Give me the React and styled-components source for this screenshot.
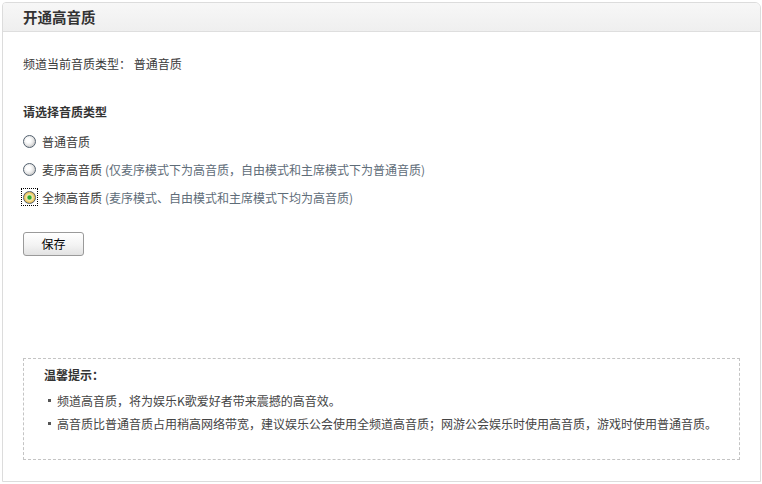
import React from "react";
import styled, { createGlobalStyle } from "styled-components";

const Global = createGlobalStyle`
  html, body { margin: 0; padding: 0; background: #fff; }
  body {
    font-family: "Noto Sans CJK SC", "Liberation Sans", sans-serif;
    font-size: 12px;
    color: #333;
  }
`;

const Page = styled.div`
  padding: 2px 2px 0 2px;
`;

const Panel = styled.section`
  width: 757px;
  height: 478px;
  border: 1px solid #dcdcdc;
  border-radius: 4px 6px 0 0;
  display: flex;
  flex-direction: column;
  overflow: hidden;
`;

const Header = styled.header`
  height: 28px;
  border-bottom: 1px solid #dedede;
  background: linear-gradient(#f7f7f7, #efefef);
  padding-left: 20px;
  display: flex;
  align-items: center;
`;

const Title = styled.h2`
  margin: 0;
  font-size: 14.5px;
  font-weight: bold;
  color: #333;
  line-height: 28px;
`;

const Body = styled.div`
  flex: 1;
  display: flex;
  flex-direction: column;
  padding: 23px 20px 21px 20px;
`;

const Line = styled.p`
  margin: 0;
  line-height: 18px;
  color: #3a3a3a;
`;

const Heading = styled.h3`
  margin: 30px 0 6px 0;
  font-size: 12px;
  font-weight: bold;
  line-height: 18px;
  color: #333;
`;

const Options = styled.div`
  display: flex;
  flex-direction: column;
`;

const Option = styled.label`
  height: 28px;
  display: flex;
  align-items: center;
  gap: 4px;
  color: #3a3a3a;
`;

const RadioWrap = styled.span`
  width: 17px;
  height: 18px;
  box-sizing: border-box;
  display: flex;
  align-items: center;
  justify-content: center;
  border: 1px dotted ${(p) => (p.$focus ? "#000" : "transparent")};
  margin-left: -2px;
`;

const Radio = styled.input`
  appearance: none;
  -webkit-appearance: none;
  margin: 0;
  width: 13px;
  height: 13px;
  border-radius: 50%;
  border: 1px solid #52606e;
  box-sizing: border-box;
  background: radial-gradient(circle at 40% 40%, #ffffff 0 2px, #e6e6e6 5px, #d2d2d2 6px);
  &:checked {
    background: radial-gradient(
      circle,
      #2ea82e 0 1.6px,
      #b8dd9a 2.4px,
      #f6e6a8 3px,
      #e9c25e 5px,
      #d9a93c 6px
    );
  }
`;

const Note = styled.span`
  color: #5e6c78;
  margin-left: 3px;
`;

const Button = styled.button`
  margin-top: 21px;
  align-self: flex-start;
  width: 61px;
  height: 24px;
  border: 1px solid #9a9a9a;
  border-radius: 3px;
  background: linear-gradient(#ffffff, #f3f3f3 55%, #e2e2e2);
  font-family: "Noto Sans CJK SC", sans-serif;
  font-size: 12px;
  font-weight: normal;
  color: #000;
  padding: 0;
  line-height: 20px;
`;

const Tips = styled.div`
  margin-top: auto;
  height: 102px;
  box-sizing: border-box;
  border: 1px dashed #c4c4c4;
  padding: 7px 20px 0 20px;
`;

const TipsTitle = styled.h4`
  margin: 0 0 5px 0;
  font-size: 12px;
  font-weight: bold;
  line-height: 18px;
  color: #333;
`;

const TipList = styled.ul`
  list-style: none;
  margin: 0;
  padding: 0;
`;

const Tip = styled.li`
  line-height: 23px;
  color: #444;
  display: flex;
  align-items: center;
  &::before {
    content: "";
    width: 3px;
    height: 3px;
    background: #555;
    margin: 0 6px 0 4px;
    flex: none;
  }
`;

const options = [
  { label: "普通音质" },
  { label: "麦序高音质", note: "(仅麦序模式下为高音质，自由模式和主席模式下为普通音质)" },
  { label: "全频高音质", note: "(麦序模式、自由模式和主席模式下均为高音质)", checked: true },
];

export default function App() {
  return (
    <>
      <Global />
      <Page>
        <Panel>
          <Header>
            <Title>开通高音质</Title>
          </Header>
          <Body>
            <Line>频道当前音质类型： 普通音质</Line>
            <Heading>请选择音质类型</Heading>
            <Options>
              {options.map((o) => (
                <Option key={o.label}>
                  <RadioWrap $focus={o.checked}>
                    <Radio type="radio" name="q" defaultChecked={!!o.checked} />
                  </RadioWrap>
                  <span>
                    {o.label}
                    {o.note && <Note>{o.note}</Note>}
                  </span>
                </Option>
              ))}
            </Options>
            <Button type="button">保存</Button>
            <Tips>
              <TipsTitle>温馨提示：</TipsTitle>
              <TipList>
                <Tip>频道高音质，将为娱乐K歌爱好者带来震撼的高音效。</Tip>
                <Tip>高音质比普通音质占用稍高网络带宽，建议娱乐公会使用全频道高音质；网游公会娱乐时使用高音质，游戏时使用普通音质。</Tip>
              </TipList>
            </Tips>
          </Body>
        </Panel>
      </Page>
    </>
  );
}
